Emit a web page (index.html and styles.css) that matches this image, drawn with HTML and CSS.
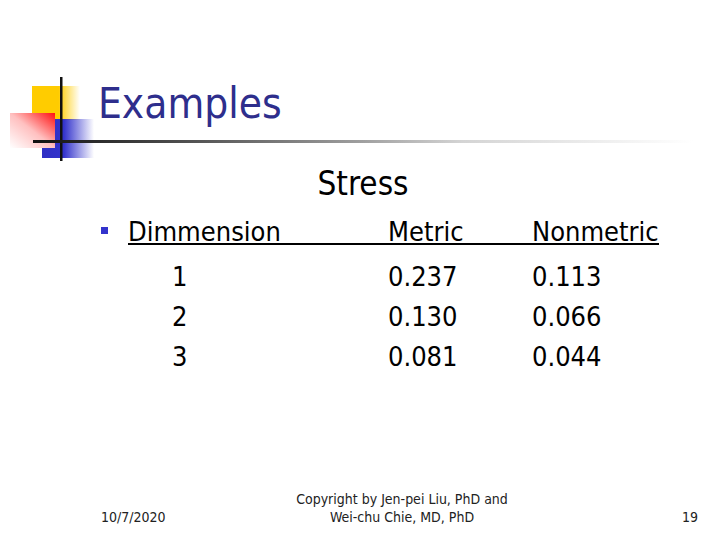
FILE: index.html
```html
<!DOCTYPE html>
<html>
<head>
<meta charset="utf-8">
<link rel="stylesheet" href="styles.css">
</head>
<body>
<div class="slide">
  <header class="head">
    <svg class="logo" width="110" height="170" viewBox="0 0 110 170" xmlns="http://www.w3.org/2000/svg">
      <defs>
        <linearGradient id="gy" x1="0" y1="0" x2="1" y2="0">
          <stop offset="0" stop-color="#ffcc00"/>
          <stop offset="0.55" stop-color="#ffcc00"/>
          <stop offset="1" stop-color="#ffcc00" stop-opacity="0"/>
        </linearGradient>
        <linearGradient id="gb" x1="0" y1="0" x2="1" y2="0">
          <stop offset="0" stop-color="#2f2fc4"/>
          <stop offset="0.42" stop-color="#3333cc"/>
          <stop offset="1" stop-color="#3333cc" stop-opacity="0"/>
        </linearGradient>
        <linearGradient id="gr" x1="0" y1="1" x2="1" y2="0">
          <stop offset="0" stop-color="#ffffff"/>
          <stop offset="0.5" stop-color="#ffc0c0"/>
          <stop offset="1" stop-color="#ff1010"/>
        </linearGradient>
      </defs>
      <rect x="32" y="86" width="48" height="34" fill="url(#gy)"/>
      <rect x="42" y="119" width="52" height="39" fill="url(#gb)"/>
      <rect x="10" y="113" width="45" height="35" fill="url(#gr)"/>
      <rect x="60" y="77" width="2.5" height="84" fill="#111"/>
    </svg>
    <div class="rule"></div>
    <h1 class="title">Examples</h1>
  </header>
  <div class="stress">Stress</div>
  <div class="table">
    <div class="row hdr">
      <span class="bullet"></span>
      <span class="c1">Dimmension</span>
      <span class="c2">Metric</span>
      <span class="c3">Nonmetric</span>
    </div>
    <div class="row">
      <span class="c1 num">1</span><span class="c2">0.237</span><span class="c3">0.113</span>
    </div>
    <div class="row">
      <span class="c1 num">2</span><span class="c2">0.130</span><span class="c3">0.066</span>
    </div>
    <div class="row">
      <span class="c1 num">3</span><span class="c2">0.081</span><span class="c3">0.044</span>
    </div>
  </div>
  <footer class="foot">
    <span class="date">10/7/2020</span>
    <span class="copy">Copyright by Jen-pei Liu, PhD and<br>Wei-chu Chie, MD, PhD</span>
    <span class="page">19</span>
  </footer>
</div>
</body>
</html>
```
FILE: styles.css
```css
html, body {
  margin: 0;
  padding: 0;
  background: #fff;
}
.slide {
  width: 720px;
  height: 540px;
  display: flex;
  flex-direction: column;
  font-family: "DejaVu Sans Condensed", "DejaVu Sans", sans-serif;
  font-stretch: condensed;
  color: #000;
  overflow: hidden;
}
.head {
  position: relative;
  height: 160px;
  box-sizing: border-box;
  padding-top: 79px;
  padding-left: 98px;
}
.logo {
  position: absolute;
  left: 0;
  top: 0;
}
.rule {
  position: absolute;
  left: 33px;
  top: 140px;
  width: 660px;
  height: 3px;
  background: linear-gradient(to right, #111 0%, #555 25%, #a0a0a0 50%, #d4d4d4 65%, #fff 100%);
}
.title {
  position: relative;
  margin: 0;
  font-size: 42px;
  font-weight: normal;
  line-height: 50px;
  color: #2e2e8c;
}
.stress {
  margin-top: 4px;
  font-size: 33px;
  line-height: 40px;
  text-align: center;
  padding-left: 6px;
}
.table {
  margin-top: 17px;
  margin-left: 128px;
  width: 531px;
  font-size: 27px;
}
.row {
  display: grid;
  grid-template-columns: 260px 144px 127px;
  line-height: 40px;
}
.row.hdr {
  position: relative;
  line-height: 22px;
  border-bottom: 2px solid #000;
  margin-bottom: 12px;
}
.bullet {
  position: absolute;
  left: -27px;
  top: 6px;
  width: 7px;
  height: 7px;
  background: #3333cc;
}
.num {
  padding-left: 44px;
}
.foot {
  margin-top: auto;
  height: 46px;
  display: flex;
  align-items: flex-end;
  padding: 0 22px 14px 101px;
  font-size: 14px;
  line-height: 18px;
  color: #222;
}
.date {
  width: 130px;
}
.copy {
  flex: 1;
  text-align: center;
  padding-right: 105px;
}
.page {
  width: 20px;
  text-align: right;
}
```
